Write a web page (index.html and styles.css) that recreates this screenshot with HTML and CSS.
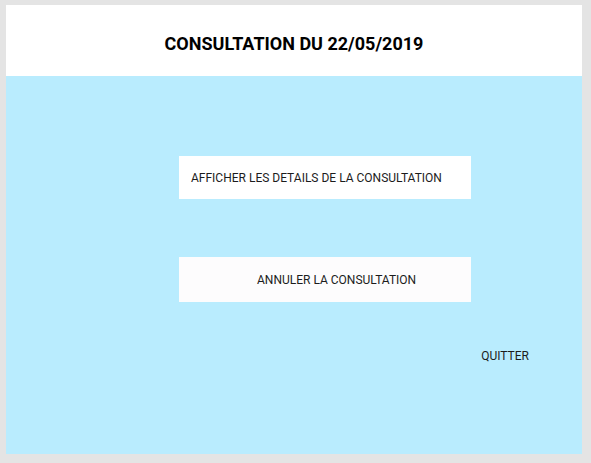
FILE: index.html
```html
<!DOCTYPE html>
<html lang="fr">
<head>
<meta charset="utf-8">
<title>Consultation</title>
<link rel="stylesheet" href="styles.css">
</head>
<body>
<div class="frame">
  <div class="card">
    <header class="header">
      <h1 class="title">CONSULTATION DU 22/05/2019</h1>
    </header>
    <main class="content">
      <button class="btn btn-details">AFFICHER LES DETAILS DE LA CONSULTATION</button>
      <button class="btn btn-cancel">ANNULER LA CONSULTATION</button>
      <button class="link-quit">QUITTER</button>
    </main>
  </div>
</div>
</body>
</html>
```
FILE: styles.css
```css
html, body {
  margin: 0;
  padding: 0;
  background: #e4e4e4;
}
.frame {
  width: 591px;
  height: 463px;
  box-sizing: border-box;
  padding: 5px 9px 9px 6px;
  font-family: Roboto, "Noto Sans", sans-serif;
}
.card {
  width: 576px;
  height: 449px;
  display: flex;
  flex-direction: column;
  background: #b9ecfe;
}
.header {
  height: 71px;
  flex: 0 0 71px;
  background: #ffffff;
  display: flex;
  align-items: center;
  justify-content: center;
  padding-top: 7px;
  box-sizing: border-box;
}
.title {
  margin: 0;
  font-size: 18px;
  font-weight: 700;
  color: #000;
  line-height: 22px;
}
.content {
  display: flex;
  flex-direction: column;
  align-items: flex-start;
  padding-left: 173px;
}
.btn {
  border: none;
  margin: 0;
  font-family: inherit;
  font-size: 12px;
  color: #1c1c1c;
  text-align: left;
  width: 292px;
  line-height: 14px;
}
.btn-details {
  margin-top: 80px;
  height: 43px;
  padding: 0 0 0 12px;
  background: #ffffff;
}
.btn-cancel {
  margin-top: 58px;
  height: 45px;
  padding: 0 0 0 78px;
  background: #fdfcfd;
}
.link-quit {
  align-self: flex-end;
  margin: 47px 53px 0 0;
  padding: 0;
  border: none;
  background: transparent;
  font-family: inherit;
  font-size: 12px;
  line-height: 14px;
  color: #1c1c1c;
}
```
